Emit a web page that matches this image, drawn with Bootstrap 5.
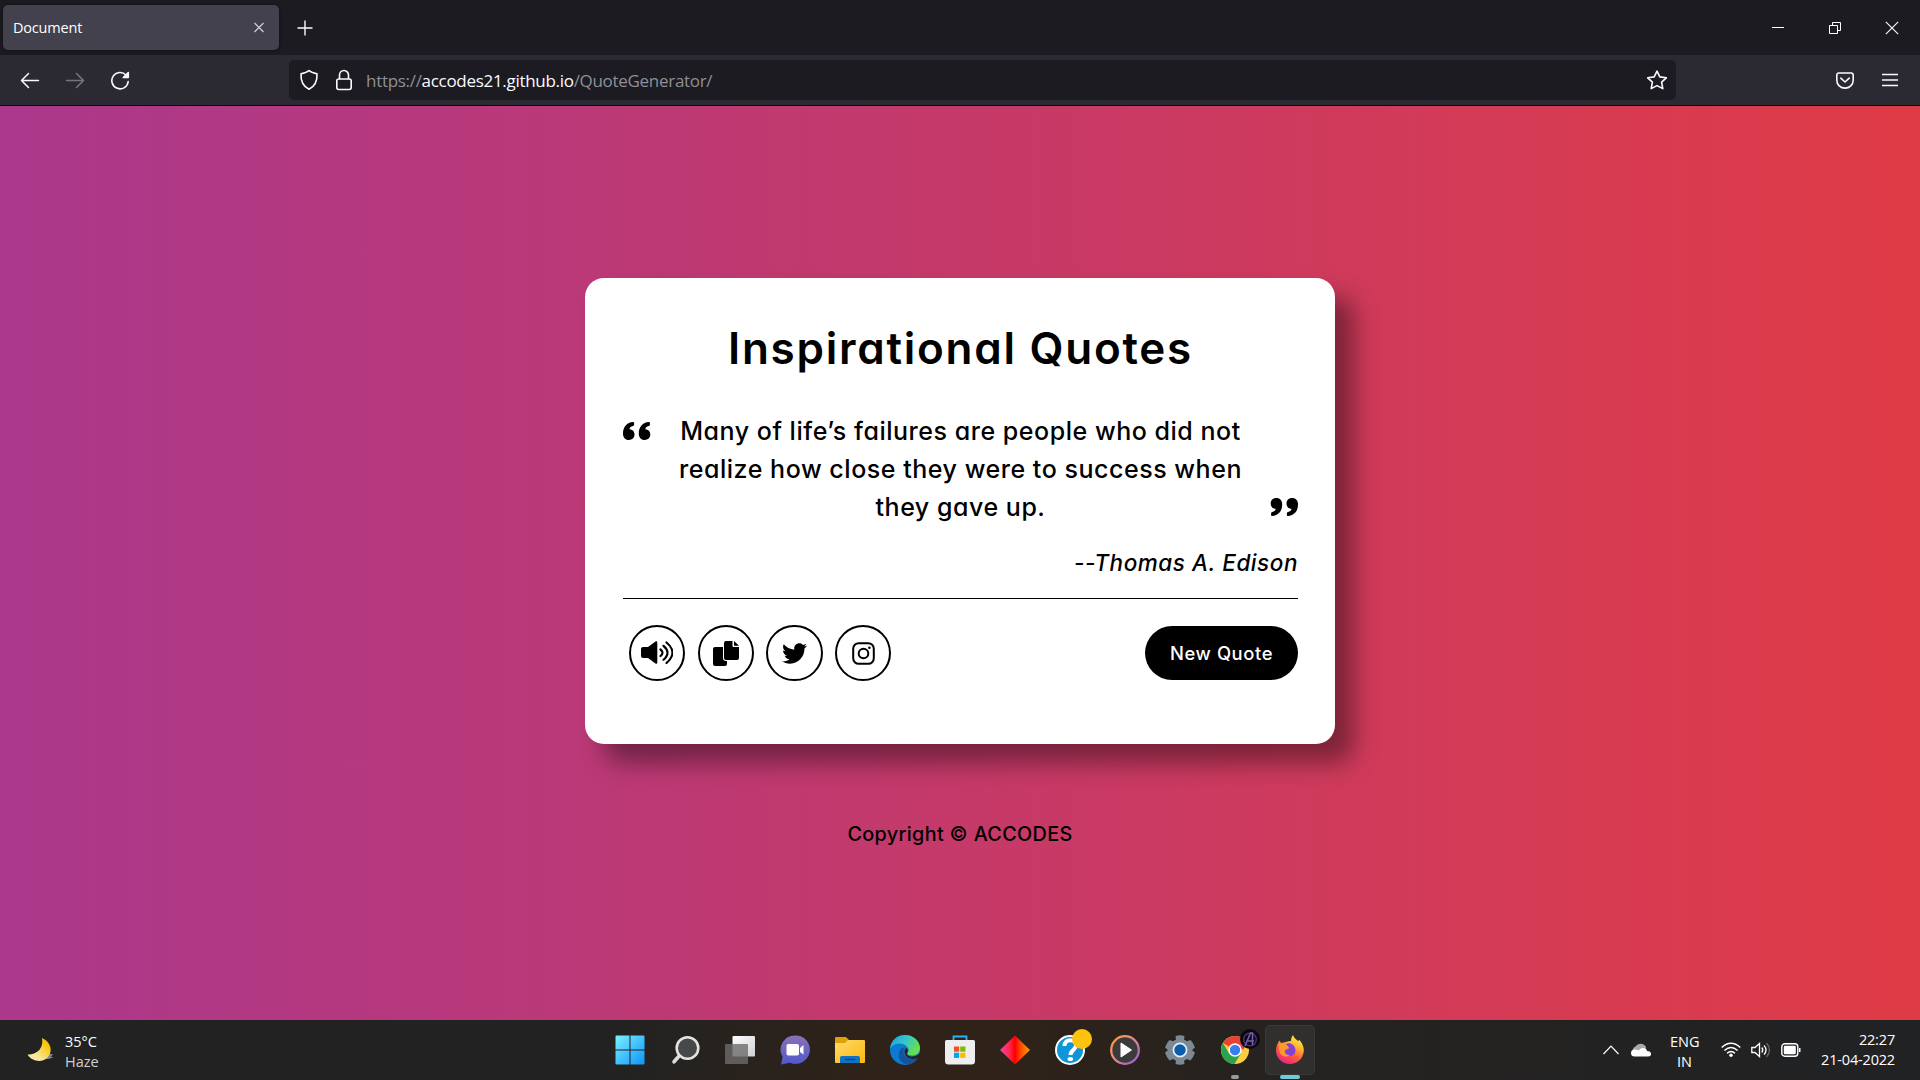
<!DOCTYPE html>
<html lang="en">
<head>
<meta charset="utf-8">
<title>Document</title>
<link href="https://cdn.jsdelivr.net/npm/bootstrap@5.3.0/dist/css/bootstrap.min.css" rel="stylesheet">
<style>
body{width:1920px;height:1080px;overflow:hidden;font-family:"Open Sans","Noto Sans",sans-serif;line-height:1.2}
svg{display:block;flex:none}
.ff-tabs{height:55px;background:#1c1b22}
.ff-tab{width:276px;height:45px;margin:5px 0 5px 3px;border-radius:5px;background:#42414d;box-shadow:0 0 4px rgba(0,0,0,.5);padding:0 14px 0 10px;font-size:14.5px;letter-spacing:-.2px}
.ff-bar{height:51px;background:#2b2a33;border-bottom:1px solid #0c0c0d}
.ff-url{width:1387px;height:40px;margin-left:159px;background:#1c1b22;border-radius:5px;color:#8f8f96;font-size:17px;letter-spacing:-.3px}
.ff-url b{font-weight:400;color:#fbfbfe}
.ff-addr{margin-left:14px;padding-top:3px}
.new-tab{margin-left:17px}
.win-btns{padding-right:21px;gap:44px}
.page-bg{height:914px;background:linear-gradient(to right,#ab388c,#df3b46);font-family:Inter,"Open Sans",sans-serif;font-weight:500;font-feature-settings:"cv11";color:#000}
.quote-box{width:750px;height:466px;margin-top:172px;padding:0 37px 0 38px;border-radius:19px;background:#fff;box-shadow:19px 19px 25px rgba(0,0,0,.4)}
.quote-title{font-size:44px;line-height:64px;padding-top:38px;margin:0;font-weight:600;letter-spacing:1.75px}
.quote-body{margin-top:32px}
.quote-text{font-size:25px;line-height:38px;letter-spacing:.53px}
.quote-author{font-size:22.5px;line-height:34px;font-style:italic;margin-top:20px;letter-spacing:.55px}
.quote-rule{height:1px;background:#000;margin-top:18px}
.quote-acts{margin-top:26px;gap:12.5px;padding-left:6px}
.round-btn{width:56.2px;height:56.2px;border:2px solid #000;border-radius:50%}
.new-btn{width:153px;height:54px;border-radius:27px;background:#000;color:#fff;font-size:18.4px;border:0;font-weight:500;letter-spacing:.6px}
.copy-line{font-size:19.8px;line-height:30px;margin-top:75px;letter-spacing:.35px}
.taskbar{height:60px;background:linear-gradient(to right,#222223 0,#222 32%,#2f2219 45%,#2f2219 52%,#252220 66%,#212224 100%);color:#fff;font-size:14.5px;line-height:20px}
.weather{width:602.500px;padding-left:26px}
.task-cell{width:55px;height:60px}
.task-active{width:50px;height:50px;border-radius:5px;background:#302f2d;border:1px solid #3a3937}
.run-mark{position:absolute;bottom:1px;left:50%;transform:translateX(-50%);height:4px;border-radius:2px}
.task-badge{position:absolute;top:9px;left:32px}
.clock{margin-left:20px;width:74px;letter-spacing:-.17px;white-space:nowrap}
</style>
</head>
<body class="d-flex flex-column m-0">
<header>
  <div class="ff-tabs d-flex align-items-center">
    <div class="ff-tab d-flex align-items-center justify-content-between text-white"><span>Document</span>
      <svg width="12" height="12" viewBox="0 0 12 12" stroke="#cfcfd8" stroke-width="1.2"><path d="M1.500 1l9 9M10.500 1l-9 9"/></svg></div>
    <svg class="new-tab" width="18" height="18" viewBox="0 0 18 18" stroke="#fbfbfe" stroke-width="1.4"><path d="M1.500 9h15M9 1.500v15"/></svg>
    <div class="win-btns d-flex align-items-center ms-auto">
      <svg width="12" height="14" viewBox="0 0 12 14" stroke="#fff"><path d="M0 6.500h12"/></svg>
      <svg width="13" height="14" viewBox="0 0 13 14" fill="none" stroke="#fff"><path d="M1.500 4.500h8v8h-8zM4.500 4.500v-3h8v8h-3"/></svg>
      <svg width="14" height="14" viewBox="0 0 14 14" stroke="#fff" stroke-width="1.1"><path d="M.8.800l12.400 12.400M13.200.800L.8 13.200"/></svg>
    </div>
  </div>
  <div class="ff-bar d-flex align-items-center">
    <svg style="margin-left:20px" width="20" height="18" viewBox="0 0 20 18" fill="none" stroke="#fbfbfe" stroke-width="1.5" stroke-linecap="round" stroke-linejoin="round"><path d="M18.500 9.500h-17M8.500 2.500L1.500 9.500l7 7"/></svg>
    <svg style="margin-left:25px" width="20" height="18" viewBox="0 0 20 18" fill="none" stroke="#77767e" stroke-width="1.5" stroke-linecap="round" stroke-linejoin="round"><path d="M1.500 9.500h17M11.500 2.500l7 7-7 7"/></svg>
    <svg style="margin-left:25px" width="20" height="20" viewBox="0 0 20 20" fill="none" stroke="#fbfbfe" stroke-width="1.600" stroke-linecap="round"><path d="M16 5A8.200 8.200 0 1 0 18.200 11.500"/><path d="M18.300 2.500v5h-5z" fill="#fbfbfe" stroke-linejoin="round"/></svg>
    <div class="ff-url d-flex align-items-center">
      <svg style="margin-left:10px" width="20" height="22" viewBox="0 0 20 22" fill="none" stroke="#fbfbfe" stroke-width="1.600" stroke-linejoin="round"><path d="M10 1.500Q12.500 3.800 18 4.800C18.400 12 16.500 17 10 20.300 3.500 17 1.600 12 2 4.800Q7.500 3.800 10 1.500z"/></svg>
      <svg style="margin-left:17px" width="16" height="22" viewBox="0 0 16 22" fill="none" stroke="#fbfbfe" stroke-width="1.600"><rect x=".8" y="10" width="14.400" height="10.500" rx="2"/><path d="M3.500 10V6a4.500 4.500 0 0 1 9 0v4"/></svg>
      <span class="ff-addr">https://<b>accodes21.github.io</b>/QuoteGenerator/</span>
      <svg class="ms-auto" style="margin-right:8px" width="22" height="20" viewBox="0 0 22 20" fill="none" stroke="#fbfbfe" stroke-width="1.600" stroke-linejoin="round"><path d="M11 1.200l2.800 5.700 6.500.9-4.700 4.400 1.200 6.400-5.800-3-5.800 3 1.200-6.400L1.700 7.800l6.500-.9z"/></svg>
    </div>
    <svg style="margin-left:160px" width="18" height="17" viewBox="0 0 18 17" fill="none" stroke="#fbfbfe" stroke-width="1.600" stroke-linecap="round" stroke-linejoin="round"><path d="M2.800 1h12.400a2 2 0 0 1 2 2v5.300a8.200 7.800 0 0 1-16.400 0V3a2 2 0 0 1 2-2z"/><path d="M4.800 6.200L9 10l4.200-3.800"/></svg>
    <svg style="margin-left:28px" width="16" height="14" viewBox="0 0 16 14" stroke="#fbfbfe" stroke-width="1.400"><path d="M0 1.500h16M0 7h16M0 12.500h16"/></svg>
  </div>
</header>

<main class="page-bg d-flex flex-column align-items-center">
  <section class="quote-box">
    <h1 class="quote-title text-center">Inspirational Quotes</h1>
    <div class="quote-body d-flex justify-content-between">
      <svg style="margin-top:10px" width="28" height="18" viewBox="0 0 28 18"><path id="q" d="M10 0C4 .5 0 4.800 0 11.500 0 15.500 2.200 18 5.800 18c3.400 0 5.700-2.200 5.700-5.400 0-3.100-2-5.200-5-5.300.3-1.800 1.400-2.900 3.500-3.300.8-.2 1.100-.7 1.100-1.500V1c0-.7-.4-1-1.100-1z"/><use href="#q" x="15.800"/></svg>
      <div class="quote-text text-center">Many of life’s failures are people who did not<br>realize how close they were to success when<br>they gave up.</div>
      <svg class="align-self-end" style="margin-bottom:10px" width="28" height="18" viewBox="0 0 28 18"><g transform="rotate(180 14 9)"><use href="#q"/><use href="#q" x="15.800"/></g></svg>
    </div>
    <div class="quote-author text-end">--Thomas A. Edison</div>
    <div class="quote-rule"></div>
    <div class="quote-acts d-flex align-items-center">
      <div class="round-btn d-flex align-items-center justify-content-center"><svg width="32" height="24" viewBox="0 0 32 24"><path d="M2 6h5l7.500-5.500c.8-.6 1.800-.2 1.800.8v20.400c0 1-1 1.400-1.800.8L7 17H2a2 2 0 0 1-2-2V8a2 2 0 0 1 2-2z"/><path d="M19.500 8.500q4 3 0 6.500M22.500 4.800q8 6.700 0 13.900M25.500 1.500q12 10 0 20.500" fill="none" stroke="#000" stroke-width="2.200" stroke-linecap="round"/></svg></div>
      <div class="round-btn d-flex align-items-center justify-content-center"><svg width="26" height="25" viewBox="0 0 26 25"><path d="M2 6h8v11a3 3 0 0 0 3 3h1v3a2 2 0 0 1-2 2H2a2 2 0 0 1-2-2V8a2 2 0 0 1 2-2z"/><path d="M13 0h6.500v5a1 1 0 0 0 1 1H26v11a2 2 0 0 1-2 2H13a2 2 0 0 1-2-2V2a2 2 0 0 1 2-2zM21 0l5 4.700h-5z"/></svg></div>
      <div class="round-btn d-flex align-items-center justify-content-center"><svg width="25" height="25" viewBox="0 0 512 512"><path d="M459.370 151.716c.325 4.548.325 9.097.325 13.645 0 138.720-105.583 298.558-298.558 298.558-59.452 0-114.680-17.219-161.137-47.106 8.447.974 16.568 1.299 25.340 1.299 49.055 0 94.213-16.568 130.274-44.832-46.132-.975-84.792-31.188-98.112-72.772 6.498.974 12.995 1.624 19.818 1.624 9.421 0 18.843-1.300 27.614-3.573-48.081-9.747-84.143-51.980-84.143-102.985v-1.299c13.969 7.797 30.214 12.670 47.431 13.319-28.264-18.843-46.781-51.005-46.781-87.391 0-19.492 5.197-37.360 14.294-52.954 51.655 63.675 129.300 105.258 216.365 109.807-1.624-7.797-2.599-15.918-2.599-24.040 0-57.828 46.782-104.934 104.934-104.934 30.213 0 57.502 12.670 76.670 33.137 23.715-4.548 46.456-13.320 66.599-25.340-7.798 24.366-24.366 44.833-46.132 57.827 21.117-2.273 41.584-8.122 60.426-16.243-14.292 20.791-32.161 39.308-52.628 54.253z"/></svg></div>
      <div class="round-btn d-flex align-items-center justify-content-center"><svg width="23" height="23" viewBox="0 0 23 23" fill="none" stroke="#000" stroke-width="2"><rect x="1.200" y="1.200" width="20.600" height="20.600" rx="5.500"/><circle cx="11.500" cy="11.500" r="4.800"/><circle cx="17.400" cy="5.700" r="1.300" fill="#000" stroke="none"/></svg></div>
      <button class="new-btn ms-auto p-0">New Quote</button>
    </div>
  </section>
  <div class="copy-line">Copyright © ACCODES</div>
</main>

<footer class="taskbar d-flex align-items-center">
  <div class="weather d-flex align-items-center">
    <svg width="30" height="26" viewBox="0 0 30 26"><defs><linearGradient id="mo" x1="0" y1="1" x2="1" y2="0"><stop offset=".3" stop-color="#fbe6a2"/><stop offset=".8" stop-color="#f8c400"/></linearGradient></defs><path d="M19 17h8l-2 3h3l-5 2h-6z" fill="#79838c"/><path d="M16 1c9 4 11 13 6 19C17 26 6 25 1.500 17.500 11 18 18 11 16 1z" fill="url(#mo)"/></svg>
    <div class="pt-1" style="margin-left:9px"><div>35°C</div><div style="color:#d0d0d0">Haze</div></div>
  </div>
  <div class="task-cell d-flex align-items-center justify-content-center"><svg width="30" height="30" viewBox="0 0 30 30"><defs><linearGradient id="wi" x1="0" y1="0" x2="1" y2="1"><stop stop-color="#7df0ff"/><stop offset="1" stop-color="#0b94fb"/></linearGradient></defs><path d="M1.500.5H14.500V14.500H.5v-13a1 1 0 0 1 1-1zM15.500.5h13a1 1 0 0 1 1 1v13h-14zM.5 15.500h14v14h-13a1 1 0 0 1-1-1zM15.500 15.500h14v13a1 1 0 0 1-1 1h-13z" fill="url(#wi)"/></svg></div>
  <div class="task-cell d-flex align-items-center justify-content-center"><svg width="30" height="30" viewBox="0 0 30 30"><path d="M10 20l-6 6.800" stroke="#dcdcdc" stroke-width="3.600" stroke-linecap="round"/><circle cx="17.500" cy="13" r="10.800" fill="#484848" stroke="#e4e4e4" stroke-width="2.600"/></svg></div>
  <div class="task-cell d-flex align-items-center justify-content-center"><svg width="30" height="30" viewBox="0 0 30 30"><defs><linearGradient id="tv" x1="0" y1="0" x2="1" y2="1"><stop stop-color="#fff"/><stop offset="1" stop-color="#cfcfcf"/></linearGradient></defs><rect x="7.500" y="1" width="22.500" height="20.500" rx="1" fill="url(#tv)"/><rect x="0" y="9" width="23" height="20" rx="1" fill="#6b6b6b" opacity=".8"/></svg></div>
  <div class="task-cell d-flex align-items-center justify-content-center"><svg width="30" height="30" viewBox="0 0 30 30"><defs><linearGradient id="ch" x1="0" y1="0" x2="0" y2="1"><stop stop-color="#8a70b8"/><stop offset="1" stop-color="#5059cb"/></linearGradient></defs><path d="M15 .5a14.200 14.200 0 1 1-5 27.200L1 29.500 2.600 22A14.200 14.200 0 0 1 15 .5z" fill="url(#ch)"/><rect x="6.500" y="9" width="12.500" height="11.500" rx="1.800" fill="#fff"/><path d="M20 13l3.500-3v9.500L20 17z" fill="#fff"/></svg></div>
  <div class="task-cell d-flex align-items-center justify-content-center"><svg width="30" height="30" viewBox="0 0 30 30"><defs><linearGradient id="fo" x1="0" y1="0" x2="1" y2="1"><stop stop-color="#ffdb69"/><stop offset="1" stop-color="#fbb80f"/></linearGradient></defs><path d="M1 2h10l3 3v5H0V3a1 1 0 0 1 1-1z" fill="#e0a009"/><path d="M0 8h10l3-3h16a1 1 0 0 1 1 1v21a1 1 0 0 1-1 1H1a1 1 0 0 1-1-1z" fill="url(#fo)"/><path d="M7 21h16a2 2 0 0 1 2 2v5H5v-5a2 2 0 0 1 2-2z" fill="#0f72c4"/><path d="M10 24.500h10" stroke="#064a86" stroke-width="1.500"/></svg></div>
  <div class="task-cell d-flex align-items-center justify-content-center"><svg width="30" height="30" viewBox="0 0 30 30"><defs><linearGradient id="eg" x1="0" y1="0" x2="1" y2=".5"><stop stop-color="#1c9ae0"/><stop offset=".5" stop-color="#34c4cf"/><stop offset="1" stop-color="#68e04a"/></linearGradient></defs><circle cx="15" cy="15" r="15" fill="#0b7ad1"/><path d="M0 14C1 5 7 0 15 0c9 0 15 6.500 15 13 0 5-4 7.500-8 7.500-3 0-5-1-4.500-2.500 1.500-2 1.200-4 .2-5.500C14 7 4 7 0 14z" fill="url(#eg)"/><path d="M10 15c-4 7 2 14.500 8 14.700 5-1 8.500-4 10-7.200-6 3-14 1-14.500-5.500-.1-2 .8-3.800 2-4.500-2-.4-4.300.5-5.500 2.500z" fill="#14549c"/><path d="M17 18c-1 2 2 3.500 5 3.500s6-1 8-3.500v4l-2 1c-6 2.500-13 0-13.500-6 0-2 1-3.500 2-4 1.500 1.500 2 3 .5 5z" fill="#2b221b"/></svg></div>
  <div class="task-cell d-flex align-items-center justify-content-center"><svg width="30" height="30" viewBox="0 0 30 30"><path d="M8.500 7V1.500h13V7" fill="none" stroke="#2db2f0" stroke-width="1.800"/><path d="M1.500 5h27a1.500 1.500 0 0 1 1.500 1.500V26a3.500 3.500 0 0 1-3.500 3.500h-23A3.500 3.500 0 0 1 0 26V6.500A1.500 1.500 0 0 1 1.500 5z" fill="#eee"/><path d="M9 11.500h5.200v5.200H9z" fill="#f25022"/><path d="M15.200 11.500h5.200v5.200h-5.200z" fill="#7fba00"/><path d="M9 17.700h5.200v5.200H9z" fill="#00a4ef"/><path d="M15.200 17.700h5.200v5.200h-5.200z" fill="#ffb900"/></svg></div>
  <div class="task-cell d-flex align-items-center justify-content-center"><svg width="30" height="30" viewBox="0 0 30 30"><defs><linearGradient id="di"><stop stop-color="#f044b0"/><stop offset=".3" stop-color="#ff2a50"/><stop offset=".5" stop-color="#fb0000"/><stop offset=".7" stop-color="#ff4d00"/><stop offset="1" stop-color="#ffa000"/></linearGradient></defs><path d="M15 .5L30 15 15 29.500 0 15z" fill="url(#di)"/></svg></div>
  <div class="task-cell d-flex align-items-center justify-content-center position-relative"><svg width="30" height="30" viewBox="0 0 30 30"><circle cx="15" cy="15" r="14" fill="#0e97d8" stroke="#fff" stroke-width="2"/><path d="M9.500 11C9.500 3 21 3.500 21 10.500c0 4-5.500 4.500-5.500 9.500" fill="none" stroke="#fff" stroke-width="4"/><ellipse cx="15.300" cy="24" rx="2.800" ry="2" fill="#fff"/></svg><svg class="task-badge" style="left:29px" width="20" height="20" viewBox="0 0 20 20"><circle cx="10" cy="10" r="10" fill="#ffc20e"/></svg></div>
  <div class="task-cell d-flex align-items-center justify-content-center"><svg width="30" height="30" viewBox="0 0 30 30"><defs><linearGradient id="me" x1="0" y1="0" x2="1" y2="1"><stop stop-color="#ff9a3c"/><stop offset=".5" stop-color="#e08a8a"/><stop offset="1" stop-color="#8a5ad8"/></linearGradient></defs><circle cx="15" cy="15" r="13.800" fill="#3b3b3b" stroke="url(#me)" stroke-width="2.300"/><path d="M11 8l10.500 7L11 22z" fill="#fff" stroke="#fff" stroke-linejoin="round"/></svg></div>
  <div class="task-cell d-flex align-items-center justify-content-center"><svg width="30" height="30" viewBox="0 0 30 30"><path d="M11 4.500L10.500 1q4.500-1.500 9 0L19 4.500l3 1.800L25.500 5q3 3 4.500 7.500L27 15l3 2.700Q28.500 22 25.500 25.500L22 24l-3 1.700.5 3.300q-4.500 1.500-9 0l.5-3.300L8 24l-3.500 1.500Q1.500 22 0 17.700L3 15 0 12.500Q1.500 8 4.500 5L8 6.300z" fill="#7c8893"/><circle cx="15" cy="15" r="6.600" fill="#0c5cae" stroke="#e8ecf0" stroke-width="1.800"/></svg></div>
  <div class="task-cell d-flex align-items-center justify-content-center position-relative"><svg width="28" height="28" viewBox="0 0 28 28"><circle cx="14" cy="14" r="14" fill="#ffcd40"/><path d="M14 14L1.900 7a14 14 0 0 1 24.200 0z" fill="#e94235"/><path d="M1.900 7a14 14 0 0 0 11.500 21L20 17.500 14 14 7.900 17z" fill="#2ba24c"/><path d="M14 7h12.100L22 14z" fill="#e94235"/><circle cx="14" cy="14" r="6.700" fill="#fff"/><circle cx="14" cy="14" r="5.200" fill="#3b7ded"/></svg>
    <svg class="task-badge" width="20" height="20" viewBox="0 0 20 20"><circle cx="10" cy="10" r="10" fill="#0c0812"/><circle cx="10" cy="10.500" r="6.300" fill="none" stroke="#4b3878" stroke-width="1.300"/><path d="M5 17l5.500-13 2 0v12M7 12h7" fill="none" stroke="#7a5fae" stroke-width="1.500"/></svg><span class="run-mark" style="width:8px;background:#9b9b9b"></span></div>
  <div class="task-cell d-flex align-items-center justify-content-center position-relative"><div class="task-active d-flex align-items-center justify-content-center"><svg width="30" height="30" viewBox="0 0 30 30"><defs><linearGradient id="fx" x1=".8" y1="0" x2=".3" y2="1"><stop stop-color="#fff04a"/><stop offset=".35" stop-color="#ffb42e"/><stop offset=".65" stop-color="#ff5a3c"/><stop offset="1" stop-color="#e81f8b"/></linearGradient></defs><path d="M18 0c1 3 3 4 5 6l1.500-1C28 9 29 13 28.800 16 28 24 22 29 15 29 7 29 1 23 1 15.500c0-4 1.500-7 3.500-10L6 8l5-1c2-1 4-1 5-1 0-2 .5-4 2-6z" fill="url(#fx)"/><path d="M11 9c4-2 9 1 9.500 6 0 4-3 6-6 6-3.500 0-5.500-2.500-5.500-5l5-2.500c-1-2-2-3-3-4.500z" fill="#8341d8"/><path d="M4 9l6-.5 4 4-4 2c-1 4 2 6 5 5.500-5 4-11 0-11-6z" fill="#ff982e"/></svg></div><span class="run-mark" style="width:20px;background:#6ccfd8"></span></div>

  <div class="d-flex align-items-center ms-auto" style="padding-right:25px">
    <svg width="16" height="10" viewBox="0 0 16 10" fill="none" stroke="#fff" stroke-width="1.200"><path d="M.5 9L8 1.200 15.500 9"/></svg>
    <svg style="margin-left:12px" width="20" height="14" viewBox="0 0 20 14"><path d="M5 12a4.500 4.500 0 0 1-.5-8.500A6 6 0 0 1 15 4l-1 8z" fill="#a9a9a9"/><path d="M3.500 13.500a3.500 3.500 0 0 1 0-7q2-.3 4 1Q11 3.500 15 6q1 1 1 2 4 0 4 3 0 2.500-3 2.500z" fill="#fff"/></svg>
    <div class="text-center pt-1" style="margin-left:19px;width:29px">ENG<br>IN</div>
    <svg style="margin-left:22px" width="20" height="16" viewBox="0 0 20 16" fill="none" stroke="#fff" stroke-width="1.400"><path d="M.7 5.500Q10-2.800 19.300 5.500M3.400 8.500Q10 2.500 16.600 8.500M6 11.300Q10 7.500 14 11.300"/><circle cx="10" cy="13.300" r="1.700" fill="#fff" stroke="none"/></svg>
    <svg style="margin-left:10px" width="20" height="16" viewBox="0 0 20 16" fill="none" stroke="#fff" stroke-width="1.300"><path d="M.8 5.500H4L8.500 1.500v13L4 10.500H.8zM10.800 5.500q2 2.500 0 5M13 3.300q4 4.700 0 9.400"/><path d="M15.500 1q6 7 0 14" stroke="#666"/></svg>
    <svg style="margin-left:10px" width="20" height="14" viewBox="0 0 20 14"><rect x=".8" y=".8" width="16" height="12.400" rx="3" fill="none" stroke="#fff" stroke-width="1.400"/><rect x="2.800" y="2.800" width="12" height="8.400" rx="1.300" fill="#fff"/><path d="M18 5h1.500v4H18z" fill="#fff"/></svg>
    <div class="clock text-end">22:27<br>21-04-2022</div>
  </div>
</footer>
<script src="https://cdn.jsdelivr.net/npm/bootstrap@5.3.0/dist/js/bootstrap.bundle.min.js"></script>
</body>
</html>
